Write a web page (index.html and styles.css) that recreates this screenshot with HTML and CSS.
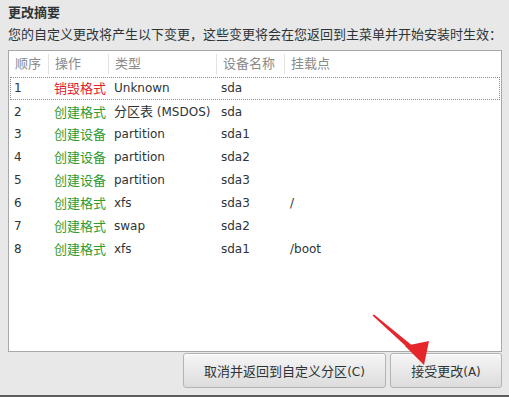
FILE: index.html
```html
<!DOCTYPE html>
<html lang="zh-CN">
<head>
<meta charset="utf-8">
<title>更改摘要</title>
<link rel="stylesheet" href="styles.css">
</head>
<body>
<div class="page">
  <h1 class="title">更改摘要</h1>
  <p class="subtitle">您的自定义更改将产生以下变更，这些变更将会在您返回到主菜单并开始安装时生效：</p>
  <div class="table">
    <div class="thead">
      <div class="th">顺序</div>
      <div class="th">操作</div>
      <div class="th">类型</div>
      <div class="th">设备名称</div>
      <div class="th last">挂载点</div>
    </div>
    <div class="tbody">
      <div class="row focus">
        <div class="td lat">1</div><div class="td red">销毁格式</div><div class="td lat">Unknown</div><div class="td lat">sda</div><div class="td lat"></div>
      </div>
      <div class="row">
        <div class="td lat">2</div><div class="td green">创建格式</div><div class="td">分区表<span class="lat"> (MSDOS)</span></div><div class="td lat">sda</div><div class="td lat"></div>
      </div>
      <div class="row">
        <div class="td lat">3</div><div class="td green">创建设备</div><div class="td lat">partition</div><div class="td lat">sda1</div><div class="td lat"></div>
      </div>
      <div class="row">
        <div class="td lat">4</div><div class="td green">创建设备</div><div class="td lat">partition</div><div class="td lat">sda2</div><div class="td lat"></div>
      </div>
      <div class="row">
        <div class="td lat">5</div><div class="td green">创建设备</div><div class="td lat">partition</div><div class="td lat">sda3</div><div class="td lat"></div>
      </div>
      <div class="row">
        <div class="td lat">6</div><div class="td green">创建格式</div><div class="td lat">xfs</div><div class="td lat">sda3</div><div class="td lat">/</div>
      </div>
      <div class="row">
        <div class="td lat">7</div><div class="td green">创建格式</div><div class="td lat">swap</div><div class="td lat">sda2</div><div class="td lat"></div>
      </div>
      <div class="row">
        <div class="td lat">8</div><div class="td green">创建格式</div><div class="td lat">xfs</div><div class="td lat">sda1</div><div class="td lat">/boot</div>
      </div>
    </div>
  </div>
  <div class="actions">
    <button class="btn btn-cancel">取消并返回到自定义分区<span class="lat">(C)</span></button>
    <button class="btn btn-accept">接受更改<span class="lat">(A)</span></button>
  </div>
  <div class="spacer"></div>
  <div class="bottom-line"></div>
  <svg class="arrow" width="509" height="397" viewBox="0 0 509 397" aria-hidden="true">
    <polygon points="372.5,315.5 374,314.5 414,347 410,350" fill="#e5262b"/>
    <polygon points="405,346 429,341 424,365" fill="#e5262b"/>
  </svg>
</div>
</body>
</html>
```
FILE: styles.css
```css
* { box-sizing: border-box; }
html, body { margin: 0; padding: 0; }
body {
  background: #e8e8e8;
  font-family: "DejaVu Sans", "Noto Sans CJK SC", sans-serif;
  font-size: 13px;
  color: #2e3436;
}
.page {
  position: relative;
  width: 509px;
  height: 397px;
  display: flex;
  flex-direction: column;
  padding: 4px 0 0 0;
}
.title {
  margin: 0 0 0 8px;
  font-size: 13px;
  font-weight: bold;
  line-height: 17px;
  color: #2e3436;
}
.subtitle {
  margin: 5px 0 0 8px;
  line-height: 17px;
  font-size: 13px;
  color: #2e3436;
  white-space: nowrap;
}
.lat { font-size: 12px; }
.table {
  margin: 7px 0 0 8px;
  width: 494px;
  height: 302px;
  border: 1px solid #a8a8a8;
  background: #fff;
  display: flex;
  flex-direction: column;
}
.thead {
  display: grid;
  grid-template-columns: 40px 60px 108px 68px 1fr;
  height: 26px;
  align-items: center;
}
.th {
  color: #8a8a8a;
  padding-left: 6px;
  line-height: 20px;
  border-right: 1px solid #e2e2e2;
}
.th.last { border-right: none; }
.tbody {
  display: flex;
  flex-direction: column;
}
.row {
  display: grid;
  grid-template-columns: 38px 60px 108px 68px 1fr;
  height: 23px;
  margin: 0 1px;
  border: 1px solid transparent;
  align-items: center;
}
.row.focus {
  border: 1px dotted #8c8c8c;
}
.td {
  padding-left: 3px;
  white-space: nowrap;
  line-height: 21px;
}
.td:nth-child(2) { padding-left: 5px; }
.td:nth-child(3) { padding-left: 5px; }
.td:nth-child(4) { padding-left: 4px; }
.td:nth-child(5) { padding-left: 5px; }
.red { color: #e0202a; }
.green { color: #2f9a2f; }
.actions {
  display: flex;
  justify-content: flex-end;
  gap: 4px;
  margin: 1px 7px 0 0;
}
.btn {
  height: 35px;
  border: 1px solid #b4b4b4;
  border-radius: 3px;
  background: linear-gradient(#f6f6f6, #dcdcdc);
  box-shadow: inset 0 1px 0 #fff;
  font-family: "DejaVu Sans", "Noto Sans CJK SC", sans-serif;
  font-size: 13px;
  color: #2e3436;
  padding: 0;
}
.btn-cancel { width: 203px; }
.btn-accept { width: 112px; }
.spacer { flex: 1; }
.bottom-line {
  height: 2px;
  background: #5c5c5c;
}
.arrow {
  position: absolute;
  left: 0;
  top: 0;
  pointer-events: none;
}
```
